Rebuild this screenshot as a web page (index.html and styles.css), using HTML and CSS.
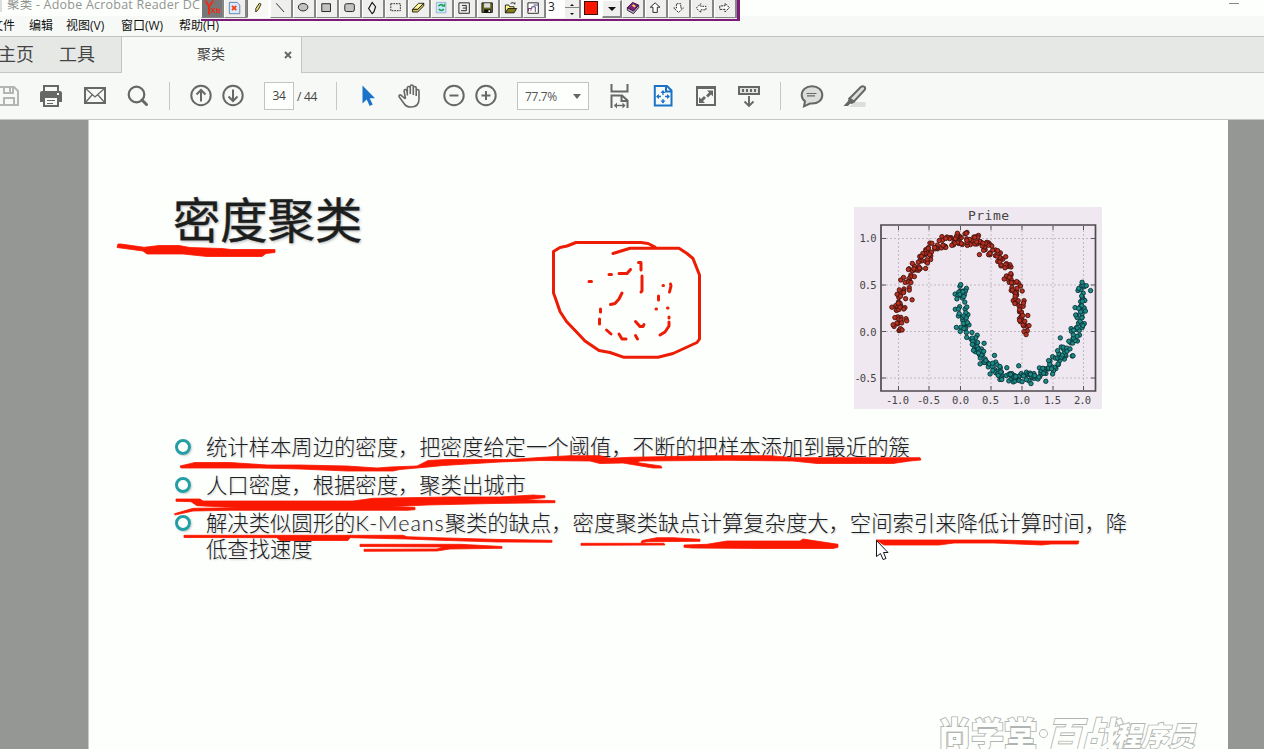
FILE: index.html
```html
<!DOCTYPE html>
<html lang="zh-CN">
<head>
<meta charset="utf-8">
<title>聚类 - Adobe Acrobat Reader DC</title>
<link rel="stylesheet" href="styles.css">
</head>
<body>
<div class="app">
  <header class="titlebar"><span class="appicon"></span><span class="caption">聚类 - Adobe Acrobat Reader DC</span><span class="minimize"></span></header>
  <nav class="menu"><span class="m-file">文件</span><span class="m-edit">编辑</span><span class="m-view">视图(V)</span><span class="m-window">窗口(W)</span><span>帮助(H)</span></nav>
  <div class="tabs">
    <div class="home-tabs"><span class="home">主页</span><span>工具</span></div>
    <div class="tab"><span>聚类</span>
      <svg class="close" width="8" height="8" viewBox="0 0 8 8"><path d="M1 1l6 6M7 1l-6 6" stroke="#666" stroke-width="1.9"/></svg>
    </div>
  </div>
  <div class="toolbar">
    <svg class="ic i-save" viewBox="0 0 28 28"><g fill="none" stroke="#b4b6b4" stroke-width="2"><path d="M4 5h15l4 4v14H4z"/><path d="M9 5v6h9V5M9 23v-7h10v7"/></g><path d="M14 6h2v4h-2z" fill="#b4b6b4"/></svg>
    <svg class="ic i-print" viewBox="0 0 28 28"><path d="M7 9V4h14v5" fill="none" stroke="#666866" stroke-width="2"/><path d="M5 9h18q2 0 2 2v9h-4v-4H7v4H3v-9q0-2 2-2z" fill="#666866"/><path d="M7 15h14v9H7z" fill="#f7f9f6" stroke="#666866" stroke-width="2"/><path d="M10 18.500h8M10 21.500h6" stroke="#666866"/><path d="M20 11h2v2h-2z" fill="#f7f9f6"/></svg>
    <svg class="ic i-mail" viewBox="0 0 28 28"><g fill="none" stroke="#666866"><path d="M4 6h20v15H4z" stroke-width="2"/><path d="M4 6l10 9 10-9M4 21l7-8M24 21l-7-8" stroke-width="1.300"/></g></svg>
    <svg class="ic i-search" viewBox="0 0 28 28"><circle cx="12.500" cy="12.500" r="7.800" fill="none" stroke="#666866" stroke-width="2.200"/><path d="M18 18l4.500 4.500" stroke="#666866" stroke-width="3" stroke-linecap="round"/></svg>
    <i class="sep s1"></i>
    <svg class="ic i-up" viewBox="0 0 28 28"><g fill="none" stroke="#666866" stroke-width="2"><circle cx="14" cy="13.500" r="9.700"/><path d="M14 19.500v-11M9.500 12.500L14 8l4.500 4.500"/></g></svg>
    <svg class="ic i-down" viewBox="0 0 28 28"><g fill="none" stroke="#666866" stroke-width="2"><circle cx="14" cy="13.500" r="9.700"/><path d="M14 7.500v11M9.500 14.500L14 19l4.500-4.500"/></g></svg>
    <span class="page">34</span><span class="total">/ 44</span>
    <i class="sep s2"></i>
    <svg class="ic i-cursor" viewBox="0 0 28 28"><path d="M8.500 3.500v18l4.200-4 3 6.500 3-1.400-3-6.300h5.300z" fill="#1a73c8"/></svg>
    <svg class="ic i-hand" viewBox="0 0 28 28"><path d="M9.500 17L5.200 13.300c-1.700-1-2.800.4-1.900 1.700L8 21.500c1.400 2.300 3.500 3.500 7 3.500 5 0 8-3 8-8V9c0-2-2.600-2-2.800 0v5M20.200 13V6c0-2-2.800-2-2.900 0v7M17.300 12V4.500c0-2-3-2-3 0V12M14.300 12V6c0-2-3-2-3 0v7.500M11.300 11L10.700 8.500c-.5-1.700-2.800-1.200-2.600.6L9.500 17" fill="none" stroke="#666866" stroke-width="1.600" stroke-linejoin="round"/></svg>
    <svg class="ic i-minus" viewBox="0 0 28 28"><g fill="none" stroke="#666866" stroke-width="2"><circle cx="14" cy="13.500" r="9.700"/><path d="M9.500 13.500h9"/></g></svg>
    <svg class="ic i-plus" viewBox="0 0 28 28"><g fill="none" stroke="#666866" stroke-width="2"><circle cx="14" cy="13.500" r="9.700"/><path d="M9.500 13.500h9M14 9v9"/></g></svg>
    <span class="zoom"><span>77.7%</span><i class="arrow"></i></span>
    <svg class="ic i-fitw" viewBox="0 0 28 28"><g fill="none" stroke="#666866" stroke-width="2"><path d="M6.500 2v7.500h16V2M6.500 26V13.500H17l5.500 5V26M16.500 13.500V19h6"/><path d="M9.500 23.500h10" stroke-width="1.400"/></g><path d="M12 20.500l-3 3 3 3zM17.500 20.500l3 3-3 3z" fill="#666866"/></svg>
    <svg class="ic i-fitp" viewBox="0 0 28 28"><g fill="none" stroke="#1a73c8" stroke-width="2"><path d="M5.800 4H18l4.500 4.500V23.500H5.800zM17 4v5.500h5.500"/><path d="M14 9v12M8 14.500h12" stroke-width="1.300" stroke-dasharray="4 4"/></g><path d="M11.500 11L14 8l2.500 3zM11.500 18.500l2.500 3 2.500-3zM10 12L7 14.500l3 2.500zM18 12l3 2.500-3 2.500z" fill="#1a73c8"/></svg>
    <svg class="ic i-full" viewBox="0 0 28 28"><path d="M5 5h18v18H5z" fill="none" stroke="#666866" stroke-width="2"/><path d="M5 6h18" stroke="#666866" stroke-width="2"/><path d="M15 8.500h6v6l-2-2-3 3-2-2 3-3zM13 21H7v-6l2 2 3-3 2 2-3 3z" fill="#666866"/></svg>
    <svg class="ic i-read" viewBox="0 0 28 28"><path d="M4 5h20v7H4z" fill="#e2e4e1" stroke="#666866" stroke-width="2"/><path d="M7 8.500h14" stroke="#666866" stroke-width="3" stroke-dasharray="2 2"/><path d="M14 14v10M9.500 19.500L14 24l4.500-4.500" fill="none" stroke="#666866" stroke-width="1.900"/></svg>
    <i class="sep s3"></i>
    <svg class="ic i-comment" viewBox="0 0 28 28"><path d="M14 4.300c6 0 10.300 3.500 10.300 8.700S20 21.500 14 21.500h-2L6 24.300l1-5C4.500 17.500 3.700 15.500 3.700 13 3.700 7.800 8 4.300 14 4.300z" fill="#dcdedb" stroke="#666866" stroke-width="2"/><path d="M8.500 11.500h10M9 13.800h8" stroke="#666866" stroke-width="1.200"/></svg>
    <svg class="ic i-mark" viewBox="0 0 28 28"><path d="M8 25l6-5h10.500v5z" fill="#dcdedb"/><path d="M8.500 16.500L20 4.800c2.500-1.500 5 .5 3.800 3L13 19.500z" fill="#dcdedb" stroke="#666866" stroke-width="2"/><path d="M8 15l6 5-3 2-2-.3-2 2.300H2.500L7 19z" fill="#666866"/></svg>
  </div>

  <main class="viewer">
    <article class="slide">
      <div class="top">
        <h1>密度聚类</h1>
        <svg class="chart" width="248" height="202" viewBox="854 207 248 202">
          <path d="M854 207h248v202H854z" fill="#f0e8f0"/>
          <g stroke="#c1bac1" stroke-dasharray="2 2" fill="none"><path d="M898.500 226v165M929 226v165M960.500 226v165M991 226v165M1022 226v165M1053 226v165M1083.500 226v165M882 238.500h213M882 285h213M882 331.500h213M882 378h213"/></g>
          <g id="red" fill="#b92f20" stroke="#421410" stroke-width=".9"></g>
          <g id="teal" fill="#1b8b88" stroke="#0a3438" stroke-width=".9"></g>
          <path d="M881 225h214.500v166H881z" fill="none" stroke="#4d4a4d" stroke-width="1.700"/>
          <path d="M898.500 226v4M929 226v4M960.500 226v4M991 226v4M1022 226v4M1053 226v4M1083.500 226v4M898.500 390v-4M929 390v-4M960.500 390v-4M991 390v-4M1022 390v-4M1053 390v-4M1083.500 390v-4M882 238.500h4M882 285h4M882 331.500h4M882 378h4M1095 238.500h-4M1095 285h-4M1095 331.500h-4M1095 378h-4" stroke="#5a575a"/>
          <g class="ticks">
            <text x="968" y="220" class="ctitle" textLength="41">Prime</text>
            <text x="859.500" y="242" textLength="17">1.0</text><text x="859.500" y="289" textLength="17">0.5</text><text x="859.500" y="335.500" textLength="17">0.0</text><text x="854.500" y="382" textLength="22">-0.5</text>
            <text x="886" y="404" textLength="23">-1.0</text><text x="917" y="404" textLength="23">-0.5</text><text x="952" y="404" textLength="17">0.0</text><text x="982" y="404" textLength="17">0.5</text><text x="1013" y="404" textLength="17">1.0</text><text x="1044" y="404" textLength="17">1.5</text><text x="1074" y="404" textLength="17">2.0</text>
          </g>
        </svg>
      </div>
      <ul class="points">
        <li>统计样本周边的密度，把密度给定一个阈值，不断的把样本添加到最近的簇</li>
        <li>人口密度，根据密度，聚类出城市</li>
        <li>解决类似圆形的<span class="latin">K-Means</span>聚类的缺点，密度聚类缺点计算复杂度大，空间索引来降低计算时间，降<br>低查找速度</li>
      </ul>
      <svg class="brand" width="270" height="40" viewBox="932 709 270 40">
        <text x="937" y="746" font-size="33" textLength="99" lengthAdjust="spacingAndGlyphs">尚学堂</text>
        <circle cx="1042.500" cy="733.500" r="3.500"/>
        <g transform="translate(1045 748) skewX(-14)"><text x="0" y="0" font-size="36" textLength="72" lengthAdjust="spacingAndGlyphs">百战</text></g>
        <g transform="translate(1113 746) skewX(-14)"><text x="0" y="0" font-size="27" textLength="81" lengthAdjust="spacingAndGlyphs">程序员</text></g>
      </svg>
    </article>
  </main>
</div>

<svg class="ink" width="1264" height="749" viewBox="0 0 1264 749">
  <g class="pen">
    <path d="M655 247l-7-3.500-7-1h-65l-9 3.500-7 1.500-6.500 4V293l1.500 4 5 14.500 6.500 10 11.500 12 7 7.500 14 9.500 11 2 14 4.800h34l15-3.800 24-11 2.500-3.500v-64l-6.500-16.500-6-5-8-5.200h-49L613 253.500"/>
    <path d="M589 281.500h2.500M609 274.500h2.500M619 273.500h8l3.500-4M638.500 262.500h2.500v7.500M642 276v15l-1 1M622 293l-3 6-4 4.500-4.500 1M600.500 309v3M599.500 319v5M606.500 330l4.500 4M619 334l3 5h4M635.500 335.500l2 3.500M635.500 321.500l4.500 5h3l1-2M663 285.500h.5M670.500 284l.5 2-1.500 6M658.500 296v4M656 309h.5M667.500 308h.5M669 317v1M669 322v4l-4 6-5 3"/>
  </g>
  <g class="blob">
    <path d="M118 244h3l23 3.300 15-1.800h20l11 2 32 1 9 1h44v3l-9 1-4 3h-55l-24-2.500h-36l-4-3-26-3.500z"/>
    <path d="M180 466L195 462.500 230 462.500 267 465 300 465 347 466 377 468 390 467 417 466 428 460.500 447 459.500 510 459.500 543 457.300 570 455.700 600 455.700 610 458.300 630 457.300 713 455.700 770 455.700 793 457.700 920 457.700 921 460 910 461 893 463.500 817 463.500 793 461 727 460.300 640 461 637 462.500 661 466 662 468 653 468 623 463 600 463.500 590 461 540 460.500 500 462 443 465.500 428 467 400 469.500 393 471 347 471 300 469 260 468 181 468z"/>
    <path d="M176 499L200 499 203 501 353 501 373 498.300 450 497 500 497 533 495 545 495.700 545 497.700 525 499.700 555 500.700 555 502.700 493 503.500 427 505 390 506.700 415 507.300 415 509.700 407 510.300 230 510.300 193 511 175 515 174.500 513.700 193 508.300 240 507.700 197 505.700 191 501.700 176 501.300z"/>
    <path d="M184 535.300L403 535.300 407 536.700 437 537.700 493 539.300 552 540.300 552 542.300 497 542 440 540.300 407 539 350 537.700 348 540.500 280 540.500 277 537.700 184 537.500z"/>
    <path d="M360 544.300L460 544.300 502 546.500 502 548.300 450 549 437 551 364 551.300 364 549.300 437 549 443 547 360 546.500zM581 543.300L664 543.300 665 545 581 545.300zM642 540.500L657 537.700 673 537.700 700 539.300 700 541.300 647 541.700 641 543zM684 545L707 544.300 727 541 800 541 803 539 838 544.300 838 547.300 833 548.500 760 548.500 692 548 684 547.300zM876 540h123l40 1h40l-1 3h-27l-9 1-48-2h-40l-15 2h-55z"/>
  </g>
  <path d="M876.500 540.500v16l4-3 2.500 6 3-1-2.500-6h4.500z" fill="#fff" stroke="#151520"/>
</svg>

<div class="draw">
  <svg class="b logo" viewBox="0 0 23 18"><path d="M4 0l4 6v10M13 0L8 7" stroke="#f02a14" stroke-width="2.200" fill="none"/><text x="10" y="14" class="yb">Xb</text></svg>
  <svg class="b" viewBox="0 0 23 18"><path d="M5 2h9l3 3v10H5z" fill="#dbe9ff" stroke="#5377a6"/><path d="M8 6l5 5M13 6l-5 5" stroke="#ee3f12" stroke-width="2"/></svg>
  <svg class="b on" viewBox="0 0 23 18"><path d="M9 9l4-6 2 1-3 6-3 3z" fill="#eee46b" stroke="#111"/></svg>
  <svg class="b" viewBox="0 0 23 18"><path d="M6 3l9 10" stroke="#111"/></svg>
  <svg class="b" viewBox="0 0 23 18"><ellipse cx="10.500" cy="7.500" rx="5.500" ry="4.300" fill="#c2c2bf" stroke="#111"/></svg>
  <svg class="b" viewBox="0 0 23 18"><path d="M5.500 3.500h10v9h-10z" fill="#c2c2bf" stroke="#111"/></svg>
  <svg class="b" viewBox="0 0 23 18"><rect x="5.500" y="3.500" width="11" height="9" rx="2" fill="#c2c2bf" stroke="#111"/></svg>
  <svg class="b" viewBox="0 0 23 18"><path d="M10.500 2l4 5-2 6-2 2-4-6z" fill="none" stroke="#111" stroke-width="1.300"/></svg>
  <svg class="b" viewBox="0 0 23 18"><path d="M5.500 3.500h11v8h-11z" fill="none" stroke="#111" stroke-dasharray="2 1"/></svg>
  <svg class="b" viewBox="0 0 23 18"><path d="M4 10l7-7h6l-7 7z" fill="#faf498" stroke="#111"/><path d="M4 10h6l7-7v3l-7 7H4z" fill="#d8c755" stroke="#111"/></svg>
  <svg class="b" viewBox="0 0 23 18"><path d="M5 2h11v12H5z" fill="#cfe6ff" stroke="#8faed0"/><path d="M13.500 9.500a3 3 0 0 1-5.500 0M7.500 6.500a3 3 0 0 1 5-1" fill="none" stroke="#16a34a" stroke-width="1.800"/><path d="M11 7h4V3z" fill="#16a34a"/></svg>
  <svg class="b" viewBox="0 0 23 18"><path d="M4.500 2.500h12v12h-12zM8 5.500h5v6H7M9 8.500h4" fill="none" stroke="#111"/></svg>
  <svg class="b" viewBox="0 0 23 18"><path d="M4.500 2.500h12v11h-12z" fill="#6b6a22" stroke="#111"/><path d="M7 3h7v5H7z" fill="#ddd"/><path d="M7 10h8v4H7z" fill="#111"/><path d="M12 11h2v2h-2z" fill="#fff"/></svg>
  <svg class="b" viewBox="0 0 23 18"><path d="M5 14V5h4l1 2h5v2" fill="#fff38a" stroke="#111"/><path d="M5 14l3-5h10l-3 5z" fill="#857c18" stroke="#111"/><path d="M11 3q3-2 5 1v-2" fill="none" stroke="#111"/></svg>
  <svg class="b" viewBox="0 0 23 18"><path d="M4.500 2.500h12v12h-12z" fill="#fff" stroke="#111"/><path d="M5 12V9h4V7h4v6M11 5h5" fill="none" stroke="#382a6c"/><path d="M8 12v-3" stroke="#e33"/></svg>
  <span class="num">3</span>
  <span class="spin"><i class="u"></i><i class="d"></i></span>
  <span class="swatch"><i></i></span>
  <span class="drop"><i></i></span>
  <svg class="b" viewBox="0 0 23 18"><path d="M5 8l6-6 7 3-6 7z" fill="#84227f" stroke="#2c0c32"/><path d="M5 8l7 4 6-7v3l-6 7-7-4z" fill="#b7a9c4" stroke="#2c0c32"/><path d="M11 5l3 2" stroke="#ee4" stroke-width="2"/></svg>
  <svg class="b" viewBox="0 0 23 18"><path d="M10.500 2.500l5.500 5h-3v6H8v-6H5z" fill="#fff" stroke="#111"/></svg>
  <svg class="b" viewBox="0 0 23 18"><path d="M11 13.500l5.500-5h-3v-5h-5v5h-3z" fill="#fff" stroke="#111" stroke-dasharray="2 1"/></svg>
  <svg class="b" viewBox="0 0 23 18"><path d="M5 8.500l5-5v3h6v4h-6v3z" fill="#fff" stroke="#111" stroke-dasharray="2 1"/></svg>
  <svg class="b" viewBox="0 0 23 18"><path d="M16.500 8l-5-5v3h-6v4h6v3z" fill="#fff" stroke="#111" stroke-dasharray="3 1"/></svg>
</div>
<script src="app.js"></script>
</body>
</html>
```

FILE: styles.css
```css
* { box-sizing: border-box; }
body { margin: 0; width: 1264px; height: 749px; overflow: hidden; position: relative; background: #fcfefb; font-family: "Open Sans", "Noto Sans CJK SC", sans-serif; color: #222; }
.app { height: 749px; display: flex; flex-direction: column; }
.titlebar { height: 16px; flex: none; display: flex; background: #fdfffc; color: #929492; font-size: 12.500px; line-height: 12px; white-space: nowrap; overflow: hidden; }
.appicon { width: 2px; height: 12px; background: #ddd; margin-right: 5px; }
.caption { line-height: 10px; letter-spacing: .22px; }
.minimize { width: 10px; height: 1px; background: #888; margin: 3px 25px 0 auto; }
.menu { height: 20px; flex: none; display: flex; background: #f7f9f6; font-size: 12px; line-height: 20px; color: #111; white-space: nowrap; }
.menu span { flex: none; }
.m-file { width: 38px; margin-left: -9px; }
.m-edit { width: 37px; }
.m-view { width: 55px; }
.m-window { width: 58px; }
.tabs { height: 37px; flex: none; display: flex; background: #e6e8e5; border-top: 1px solid #c2c4c1; border-bottom: 1px solid #c6c8c5; }
.home-tabs { width: 122px; flex: none; border-right: 1px solid #c2c4c1; font-size: 18px; line-height: 34px; color: #444; display: flex; white-space: nowrap; }
.home { margin-left: -2px; width: 61px; flex: none; }
.tab { width: 180px; height: 36px; background: #f7f9f6; border-right: 1px solid #c2c4c1; display: flex; align-items: center; padding: 0 9px 0 75px; justify-content: space-between; font-size: 14px; line-height: 18px; color: #444; }
.tab span { padding-bottom: 2px; }
.toolbar { height: 47px; flex: none; background: #f7f9f6; border-bottom: 1px solid #c6c8c5; display: flex; align-items: center; }
.ic { width: 28px; height: 28px; flex: none; }
.i-save { margin-left: -5px; }
.i-print { margin-left: 14px; }
.i-mail { margin-left: 16px; }
.i-search { margin-left: 15px; }
.sep { width: 1px; height: 28px; background: #c6c8c5; flex: none; }
.s1, .s3, .i-up, .page, .i-comment { margin-left: 17px; }
.i-down, .i-plus { margin-left: 4px; }
.page { width: 30px; height: 28px; border: 1px solid #c2c4c1; background: #fdfffc; text-align: center; font-size: 12px; line-height: 26px; color: #444; letter-spacing: -.4px; }
.total { width: 39px; padding-left: 3px; margin-right: 3px; font-size: 12px; color: #444; white-space: nowrap; letter-spacing: -.3px; }
.i-cursor { margin-left: 17px; }
.i-hand { margin-left: 14px; }
.i-minus { margin-left: 16px; }
.i-full, .i-read, .i-mark { margin-left: 15px; }
.zoom { width: 72px; height: 28px; margin-left: 17px; border: 1px solid #c2c4c1; background: #fdfffc; display: flex; align-items: center; justify-content: space-between; padding: 0 7px; font-size: 12px; color: #555; letter-spacing: -.4px; }
.arrow { border: 4px solid transparent; border-top: 5px solid #666; border-bottom: 0; }
.i-fitw, .i-fitp { margin-left: 16px; }
.viewer { flex: 1; min-height: 0; background: #959794; padding: 0 36px 0 88px; }
.slide { width: 1140px; height: 629px; background: #fdfffc; border-left: 1px solid #c8cac7; padding: 0 0 0 86px; display: flex; flex-direction: column; }
.top { display: flex; justify-content: space-between; padding: 66px 126px 0 0; height: 289px; }
h1 { margin: -3px 0 0 -2px; font: 400 47.300px/70px "Noto Sans CJK SC", sans-serif; color: #1c1e1e; text-shadow: 1px 1px 3px #aaa; -webkit-text-stroke: .4px #1c1e1e; }
.chart { margin-top: 21px; flex: none; }
.ticks { font: 10.500px "DejaVu Sans Mono", monospace; fill: #444; }
.ctitle { font-size: 13px; }
.points { list-style: none; margin: 24px 0 0; padding: 0; display: flex; flex-direction: column; gap: 12px; }
.points li { position: relative; padding-left: 31px; font: 300 21.340px/26px "Noto Sans CJK SC", sans-serif; color: #1b2023; text-shadow: 1px 1px 2px #ccc; white-space: nowrap; }
.points li::before { content: ""; box-sizing: border-box; position: absolute; left: 0; top: 6px; width: 16px; height: 16px; border: 3px solid #249ea5; border-radius: 50%; box-shadow: 1px 1px 2px #ccc; }
.latin { font-family: Lato, sans-serif; font-size: 21.500px; letter-spacing: .95px; font-weight: 300; line-height: 20px; }
.brand { margin: auto 25px 0 auto; font-family: "Noto Sans CJK SC", sans-serif; font-weight: 900; fill: #fdfffc; stroke: #b2b4b1; stroke-width: 1.800px; paint-order: stroke fill; }
.ink { position: absolute; left: 0; top: 0; pointer-events: none; }
.pen { fill: none; stroke: #ed1c05; stroke-width: 3px; stroke-linecap: round; stroke-linejoin: round; }
.blob { fill: #fb1800; stroke: #fb1800; stroke-width: .8px; stroke-linejoin: round; }
.draw { position: absolute; left: 201px; top: 0; width: 539px; height: 21px; display: flex; background: #efefed; border-bottom: 2px solid #7d1b7b; border-right: 3px solid #7d1b7b; }
.b { width: 23px; height: 18px; flex: none; background: #efefed; border-right: 2px solid #858784; border-bottom: 1px solid #858784; border-left: 1px solid #fff; }
.logo { background: #777; }
.on { background: #f8f8f5; border-color: #fff; border-left-color: #777; }
.yb { font: bold 9px "Liberation Sans", sans-serif; fill: #f02a14; }
.num { width: 19px; height: 18px; background: #fff; font: 12px/14px "Open Sans", sans-serif; padding-left: 2px; }
.spin { width: 16px; height: 18px; display: flex; flex-direction: column; align-items: center; justify-content: space-around; border-right: 2px solid #858784; background: linear-gradient(#efefed 7px, #858784 7px, #858784 8px, #efefed 8px); }
.u { border: 2px solid transparent; border-bottom-color: #111; border-top: 0; }
.d { border: 2px solid transparent; border-top-color: #111; border-bottom: 0; }
.swatch { width: 21px; height: 18px; background: #fff; padding: 1px 3px; }
.swatch i { display: block; width: 14px; height: 14px; background: #fb1800; border: 1px solid #3b1010; }
.drop { width: 20px; height: 18px; background: #efefed; border: 1px solid #fff; border-right: 2px solid #858784; border-bottom: 2px solid #858784; display: grid; place-items: center; }
.drop i { border: 4px solid transparent; border-top-color: #111; border-bottom: 0; }
```

FILE: app.js
```js
// Two interleaved half-circle clusters with seeded gaussian noise.
let seed = 42;
function rnd() { seed = (seed * 1664525 + 1013904223) % 4294967296; return seed / 4294967296; }
function gauss() { return Math.sqrt(-2 * Math.log(rnd() + 1e-9)) * Math.cos(6.28318 * rnd()); }
function plot(id, fx, fy) {
  const g = document.getElementById(id);
  for (let i = 0; i < 250; i++) {
    const t = Math.PI * i / 249;
    const x = fx(t) + gauss() * 0.06, y = fy(t) + gauss() * 0.045;
    const c = document.createElementNS("http://www.w3.org/2000/svg", "circle");
    c.setAttribute("cx", (960.5 + x * 61.6).toFixed(1));
    c.setAttribute("cy", (331.6 - y * 93).toFixed(1));
    c.setAttribute("r", "2.2");
    g.appendChild(c);
  }
}
plot("red", t => Math.cos(t), t => Math.sin(t));
plot("teal", t => 1 - Math.cos(t), t => 0.5 - Math.sin(t));
```
